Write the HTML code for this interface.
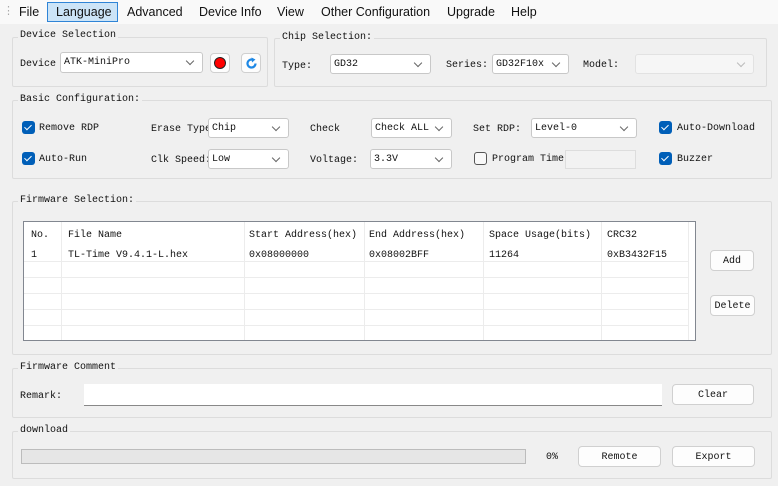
<!DOCTYPE html>
<html><head><meta charset="utf-8"><style>
*{box-sizing:border-box;margin:0;padding:0}
body{width:778px;height:486px;background:#f0f0f0;position:relative;overflow:hidden;font-family:"Liberation Mono",monospace;font-size:10px;color:#111}
.a{position:absolute;white-space:nowrap}
span.a{margin-top:2px}
.menu{left:0;top:0;width:778px;height:24px;background:#f9f9f9;font-family:"Liberation Sans",sans-serif;font-size:12.5px}
.menu span{position:absolute;top:5px}
.menu span.a{margin-top:0}
.grp{position:absolute;border:1px solid #dcdcdc;border-radius:2px}
.gt{position:absolute;background:#f0f0f0;padding:0 2px;top:-8px;left:5px;line-height:14px}
.cb{position:absolute;background:#fff;border:1px solid #c8c8c8;border-radius:3px;line-height:20px;padding-left:3px}
.cb:after{content:"";position:absolute;right:9px;top:5px;width:5px;height:5px;border-right:1px solid #666;border-bottom:1px solid #666;transform:rotate(45deg)}
.cb.dis{background:#f6f6f6;border-color:#e2e2e2}.cb.dis:after{border-color:#bbb}
.chk{position:absolute;width:13px;height:13px;border-radius:3px;background:#005fb8}
.chk:after{content:"";position:absolute;left:4px;top:2px;width:3px;height:6px;border-right:1.5px solid #fff;border-bottom:1.5px solid #fff;transform:rotate(45deg)}
.btn{position:absolute;background:#fdfdfd;border:1px solid #d0d0d0;border-radius:4px;text-align:center;line-height:21px!important}
.tbl{position:absolute;left:23px;top:221px;width:673px;height:120px;background:#fff;border:1px solid #828790}
.vl{position:absolute;top:0;width:1px;height:118px;background:#ececec}
.hl{position:absolute;left:0;width:664px;height:1px;background:#ececec}
</style></head><body>
<div class="a menu">
<span style="left:3px;top:4px;color:#aaa;font-size:11px">⋮</span>
<span style="left:19px">File</span>
<div class="a" style="left:47px;top:2px;width:71px;height:20px;background:#cce4f7;border:1px solid #2f84d6"></div>
<span style="left:56px">Language</span>
<span style="left:127px">Advanced</span>
<span style="left:199px">Device Info</span>
<span style="left:277px">View</span>
<span style="left:321px">Other Configuration</span>
<span style="left:447px">Upgrade</span>
<span style="left:511px">Help</span>
</div>

<div class="grp" style="left:12px;top:37px;width:256px;height:50px"><span class="gt" style="top:-9px">Device Selection</span></div>
<span class="a" style="left:20px;top:57px">Device</span>
<div class="cb" style="left:60px;top:52px;width:143px;height:21px">ATK-MiniPro</div>
<div class="btn" style="left:210px;top:53px;width:20px;height:20px"><div class="a" style="left:3px;top:3px;width:12px;height:12px;border-radius:50%;background:#f00;border:1.5px solid #222"></div></div>
<div class="btn" style="left:241px;top:53px;width:20px;height:20px"><svg class="a" style="left:3px;top:3px" width="13" height="13" viewBox="0 0 13 13"><path d="M10.5 6.5A4 4 0 1 1 8 2.8" fill="none" stroke="#1e88e5" stroke-width="2.2"/><path d="M6.5 0.5L10.5 2.5L7 5.5Z" fill="#1e88e5"/></svg></div>

<div class="grp" style="left:274px;top:38px;width:493px;height:49px"><span class="gt" style="top:-8px">Chip Selection:</span></div>
<span class="a" style="left:282px;top:59px">Type:</span>
<div class="cb" style="left:330px;top:54px;width:101px;height:20px">GD32</div>
<span class="a" style="left:446px;top:58px">Series:</span>
<div class="cb" style="left:492px;top:54px;width:77px;height:20px">GD32F10x</div>
<span class="a" style="left:583px;top:58px">Model:</span>
<div class="cb dis" style="left:635px;top:54px;width:119px;height:20px"></div>

<div class="grp" style="left:12px;top:100px;width:760px;height:79px"><span class="gt" style="top:-8px">Basic Configuration:</span></div>
<div class="chk" style="left:22px;top:121px"></div><span class="a" style="left:39px;top:121px">Remove RDP</span>
<span class="a" style="left:151px;top:122px">Erase Type</span>
<div class="cb" style="left:208px;top:118px;width:81px;height:20px">Chip</div>
<span class="a" style="left:310px;top:122px">Check</span>
<div class="cb" style="left:371px;top:118px;width:81px;height:20px">Check ALL</div>
<span class="a" style="left:473px;top:122px">Set RDP:</span>
<div class="cb" style="left:531px;top:118px;width:106px;height:20px">Level-0</div>
<div class="chk" style="left:659px;top:121px"></div><span class="a" style="left:677px;top:121px">Auto-Download</span>

<div class="chk" style="left:22px;top:152px"></div><span class="a" style="left:39px;top:152px">Auto-Run</span>
<span class="a" style="left:151px;top:153px">Clk Speed:</span>
<div class="cb" style="left:208px;top:149px;width:81px;height:20px">Low</div>
<span class="a" style="left:310px;top:153px">Voltage:</span>
<div class="cb" style="left:370px;top:149px;width:82px;height:20px">3.3V</div>
<div class="a" style="left:474px;top:152px;width:13px;height:13px;border:1px solid #555;border-radius:3px;background:#f8f8f8"></div>
<span class="a" style="left:492px;top:152px">Program Time</span>
<div class="a" style="left:565px;top:150px;width:71px;height:19px;border:1px solid #ddd;background:#f2f2f2"></div>
<div class="chk" style="left:659px;top:152px"></div><span class="a" style="left:677px;top:152px">Buzzer</span>

<div class="grp" style="left:12px;top:201px;width:760px;height:154px"><span class="gt" style="top:-8px">Firmware Selection:</span></div>
<div class="tbl">
<div class="vl" style="left:37px"></div><div class="vl" style="left:220px"></div><div class="vl" style="left:340px"></div><div class="vl" style="left:459px"></div><div class="vl" style="left:577px"></div><div class="vl" style="left:664px"></div>
<div class="hl" style="top:39px"></div><div class="hl" style="top:55px"></div><div class="hl" style="top:71px"></div><div class="hl" style="top:87px"></div><div class="hl" style="top:103px"></div>
<span class="a" style="left:7px;top:6px">No.</span><span class="a" style="left:44px;top:6px">File Name</span><span class="a" style="left:225px;top:6px">Start Address(hex)</span><span class="a" style="left:345px;top:6px">End Address(hex)</span><span class="a" style="left:465px;top:6px">Space Usage(bits)</span><span class="a" style="left:583px;top:6px">CRC32</span>
<span class="a" style="left:7px;top:26px">1</span><span class="a" style="left:44px;top:26px">TL-Time V9.4.1-L.hex</span><span class="a" style="left:225px;top:26px">0x08000000</span><span class="a" style="left:345px;top:26px">0x08002BFF</span><span class="a" style="left:465px;top:26px">11264</span><span class="a" style="left:583px;top:26px">0xB3432F15</span>
</div>
<div class="btn" style="left:710px;top:250px;width:44px;height:21px">Add</div>
<div class="btn" style="left:710px;top:295px;width:45px;height:21px">Delete</div>

<div class="grp" style="left:12px;top:368px;width:760px;height:50px"><span class="gt" style="top:-8px">Firmware Comment</span></div>
<span class="a" style="left:20px;top:389px">Remark:</span>
<div class="a" style="left:84px;top:384px;width:578px;height:22px;background:#fff;border-bottom:1px solid #888"></div>
<div class="btn" style="left:672px;top:384px;width:82px;height:21px">Clear</div>

<div class="grp" style="left:12px;top:431px;width:760px;height:48px"><span class="gt" style="top:-8px">download</span></div>
<div class="a" style="left:21px;top:449px;width:505px;height:15px;background:#e6e6e6;border:1px solid #bcbcbc"></div>
<span class="a" style="left:546px;top:450px">0%</span>
<div class="btn" style="left:578px;top:446px;width:83px;height:21px">Remote</div>
<div class="btn" style="left:672px;top:446px;width:83px;height:21px">Export</div>
</body></html>
